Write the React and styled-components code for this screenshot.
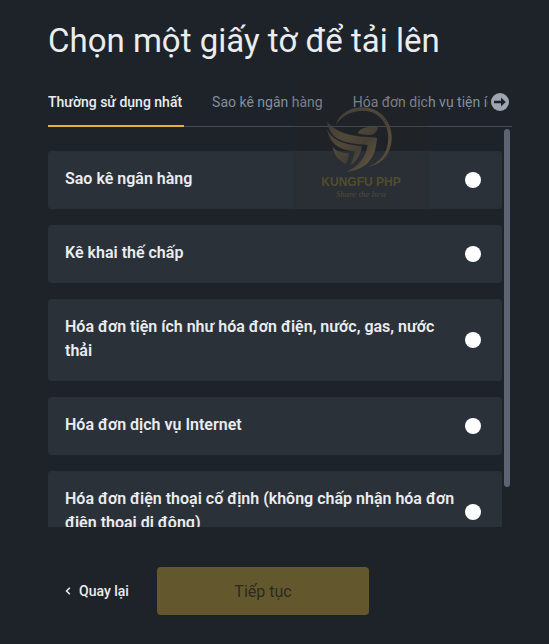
import React, { useState } from "react";
import styled, { createGlobalStyle } from "styled-components";

const tabs = [
  "Thường sử dụng nhất",
  "Sao kê ngân hàng",
  "Hóa đơn dịch vụ tiện ích",
];

const documents = [
  "Sao kê ngân hàng",
  "Kê khai thế chấp",
  "Hóa đơn tiện ích như hóa đơn điện, nước, gas, nước thải",
  "Hóa đơn dịch vụ Internet",
  "Hóa đơn điện thoại cố định (không chấp nhận hóa đơn điện thoại di động)",
];

export default function App() {
  const [tab, setTab] = useState(0);
  const [selected, setSelected] = useState(null);

  return (
    <Page>
      <GlobalStyle />
      <Title>Chọn một giấy tờ để tải lên</Title>
      <TabBar>
        <TabList role="tablist">
          {tabs.map((name, index) => (
            <Tab
              key={name}
              type="button"
              role="tab"
              aria-selected={tab === index}
              $active={tab === index}
              onClick={() => setTab(index)}
            >
              {name}
            </Tab>
          ))}
        </TabList>
        <NextButton type="button" aria-label="Tiếp">
          <ArrowIcon />
        </NextButton>
      </TabBar>
      <ScrollArea>
        <List>
          {documents.map((name, index) => (
            <Card key={name} htmlFor={`document-${index}`}>
              <CardText>{name}</CardText>
              <Radio
                id={`document-${index}`}
                name="document"
                checked={selected === index}
                onChange={() => setSelected(index)}
              />
            </Card>
          ))}
        </List>
        <Track>
          <Thumb />
        </Track>
      </ScrollArea>
      <Footer>
        <BackButton type="button">
          <ChevronIcon />
          Quay lại
        </BackButton>
        <ContinueButton type="button" disabled={selected === null}>
          Tiếp tục
        </ContinueButton>
      </Footer>
      <Watermark>
        <WatermarkLogo />
        <Brand>KUNGFU PHP</Brand>
        <Slogan>Share the best</Slogan>
      </Watermark>
    </Page>
  );
}

function ArrowIcon() {
  return (
    <svg width="18" height="18" viewBox="0 0 18 18" aria-hidden="true">
      <circle cx="9" cy="9" r="9" fill="#a0a5b2" />
      <path d="M3 7.700h7V4.500L14.800 9 10 13.500v-3.200H3z" fill="#1e2329" />
    </svg>
  );
}

function ChevronIcon() {
  return (
    <svg width="6" height="8" viewBox="0 0 6 8" aria-hidden="true">
      <path d="M4.800 .8 1.600 4l3.200 3.200" fill="none" stroke="#eaecef" strokeWidth="1.600" />
    </svg>
  );
}

function WatermarkLogo() {
  return (
    <svg width="80" height="76" viewBox="0 0 240 228" aria-hidden="true">
      <defs>
        <linearGradient id="gold" x1="0" y1="0" x2="240" y2="228" gradientUnits="userSpaceOnUse">
          <stop offset="0" stopColor="#393731" />
          <stop offset="0.400" stopColor="#50483a" />
          <stop offset="0.550" stopColor="#443f35" />
          <stop offset="0.700" stopColor="#594f3c" />
          <stop offset="1" stopColor="#3c3a33" />
        </linearGradient>
      </defs>
      <g fill="url(#gold)">
        <path d="M44 74C58 40 88 22 124 22c50 0 88 38 88 90 0 50-30 84-72 88 36-10 62-44 62-86 0-46-32-82-76-82-34 0-62 14-82 42z" />
        <path d="M18 66c24 26 52 36 90 42 26 4 44 2 60 6-2 36-14 72-46 88-14 8-28 13-46 13 38-14 60-48 64-80-36-2-86-6-106-32-7-10-13-22-16-37z" />
        <path d="M18 88c18 32 44 46 104 50-2 26-14 46-34 58 6-14 12-28 12-42-44-4-72-20-82-66z" />
        <path d="M34 140c10 12 26 18 50 20-2 14-4 22-10 32-22-12-36-30-40-52z" />
        <path d="M110 100c10-20 34-20 62-18-4 12-10 20-20 22-14 2-28 0-42-4z" />
      </g>
    </svg>
  );
}

const GlobalStyle = createGlobalStyle`
  * {
    box-sizing: border-box;
  }
  body {
    margin: 0;
    background: #1e2329;
    color: #eaecef;
    font-family: Roboto, "Noto Sans", sans-serif;
  }
  button {
    border: 0;
    padding: 0;
    background: none;
    color: inherit;
    font-family: inherit;
    cursor: pointer;
  }
`;

const Page = styled.main`
  position: relative;
  display: flex;
  flex-direction: column;
  height: 100vh;
  min-height: 480px;
  padding: 20px 37px 29px 48px;
`;

const Title = styled.h1`
  margin: 0 0 16px;
  font-size: 33px;
  font-weight: 400;
  line-height: 42px;
`;

const TabBar = styled.div`
  display: flex;
  align-items: center;
  flex-shrink: 0;
  height: 49px;
  border-bottom: 1px solid #474d57;
`;

const TabList = styled.div`
  display: flex;
  flex: 1;
  gap: 28px;
  min-width: 0;
  height: 49px;
  overflow: hidden;
`;

const Tab = styled.button`
  flex-shrink: 0;
  height: 49px;
  padding: 2px 2px 0 0;
  border-bottom: 2px solid ${(props) => (props.$active ? "#e0b42c" : "transparent")};
  color: ${(props) => (props.$active ? "#eaecef" : "#848e9c")};
  font-size: 14px;
  font-weight: ${(props) => (props.$active ? 500 : 400)};
  white-space: nowrap;
`;

const NextButton = styled.button`
  display: flex;
  flex-shrink: 0;
  margin: 0 3px;
`;

const ScrollArea = styled.div`
  display: flex;
  flex: 1;
  gap: 2px;
  min-height: 0;
  padding-top: 2px;
`;

const List = styled.div`
  display: flex;
  flex: 1;
  flex-direction: column;
  gap: 16px;
  padding: 22px 0 16px;
  overflow-y: auto;
  scrollbar-width: none;
`;

const Card = styled.label`
  display: flex;
  flex-shrink: 0;
  align-items: center;
  gap: 8px;
  padding: 0 20px 0 16px;
  border: 1px solid #2b3036;
  border-radius: 3px;
  background: #2b3139;
  cursor: pointer;
`;

const CardText = styled.span`
  flex: 1;
  padding: 15px 0 17px;
  font-size: 16px;
  font-weight: 600;
  line-height: 24px;
`;

const Radio = styled.input.attrs({ type: "radio" })`
  flex-shrink: 0;
  appearance: none;
  width: 16px;
  height: 16px;
  margin: 0;
  border-radius: 50%;
  background: #ffffff;

  &:checked {
    border: 5px solid #fcd535;
  }
`;

const Track = styled.div`
  width: 6px;
  margin-right: 2px;
`;

const Thumb = styled.div`
  height: 90%;
  border-radius: 3px;
  background: #5e6373;
`;

const Footer = styled.div`
  display: flex;
  flex-shrink: 0;
  padding-top: 40px;
`;

const BackButton = styled.button`
  display: flex;
  align-items: center;
  gap: 8px;
  width: 109px;
  padding-left: 17px;
  font-size: 14px;
  font-weight: 500;
`;

const ContinueButton = styled.button`
  width: 212px;
  height: 48px;
  border-radius: 4px;
  background: #fcd535;
  color: #1e2329;
  font-size: 16px;

  &:disabled {
    background: #63582d;
    color: #2c2a20;
    cursor: default;
  }
`;

const Watermark = styled.div`
  position: absolute;
  top: 80px;
  right: 120px;
  display: flex;
  flex-direction: column;
  align-items: center;
  width: 136px;
  height: 130px;
  padding-top: 20px;
  background: rgba(40, 36, 28, 0.12);
  pointer-events: none;
`;

const Brand = styled.span`
  color: #514d2c;
  font-family: "Liberation Sans", sans-serif;
  font-size: 12px;
  font-weight: 700;
  line-height: 12px;
`;

const Slogan = styled.span`
  color: #4c4b38;
  font-family: "Liberation Serif", serif;
  font-size: 9px;
  font-style: italic;
  line-height: 12px;
`;
